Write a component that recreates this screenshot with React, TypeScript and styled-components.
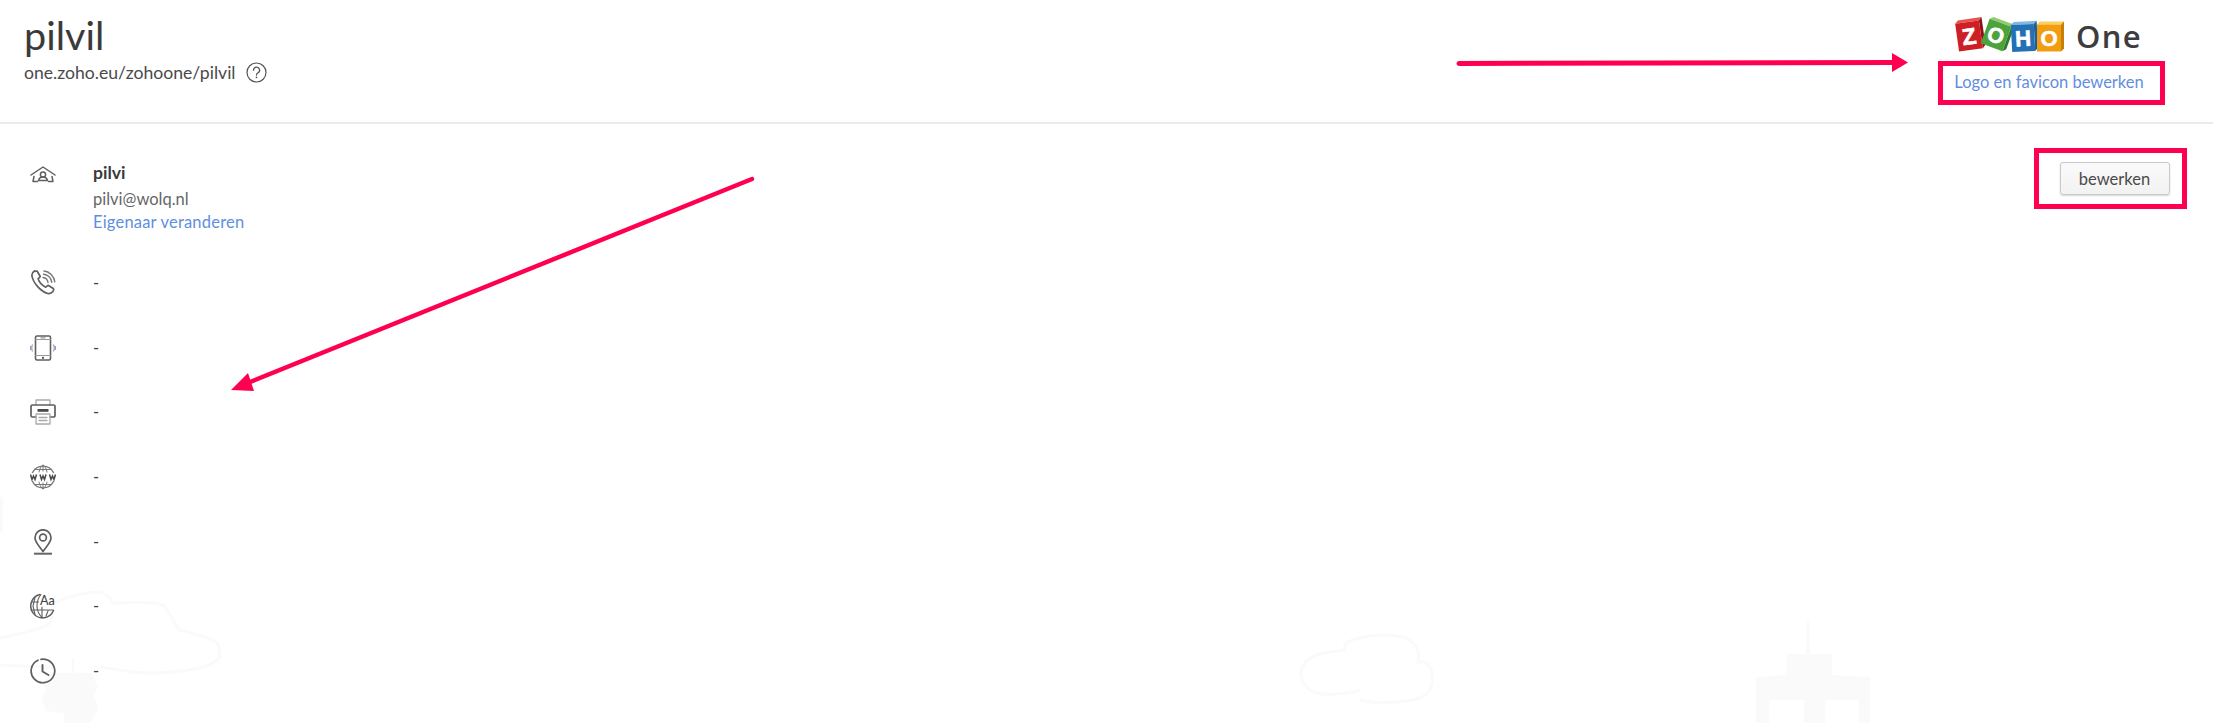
import React from "react";
import styled, { createGlobalStyle } from "styled-components";

const Global = createGlobalStyle`
  html, body { margin: 0; padding: 0; background: #fff; }
  body { font-family: Lato, "Open Sans", sans-serif; color: #333; }
`;

const Page = styled.div`
  position: relative;
  width: 2213px;
  height: 723px;
  overflow: hidden;
  background: #fff;
`;
const Backdrop = styled.svg`
  position: absolute;
  inset: 0;
  pointer-events: none;
`;
const Annotations = styled.svg`
  position: absolute;
  inset: 0;
  pointer-events: none;
  z-index: 3;
`;
const Header = styled.header`
  position: relative;
  height: 124px;
  box-sizing: border-box;
  border-bottom: 2px solid #ebebeb;
  padding: 0 48px 0 24px;
  display: flex;
  justify-content: space-between;
`;
const Org = styled.div`
  display: flex;
  flex-direction: column;
`;
const Title = styled.h1`
  margin: 13px 0 0;
  font-size: 39.6px;
  line-height: 44px;
  font-weight: 400;
  color: #3a3a3a;
`;
const UrlRow = styled.div`
  display: flex;
  align-items: center;
  gap: 10px;
  margin-top: 5px;
  font-size: 17.6px;
  line-height: 20px;
  color: #4a4a4a;
`;
const Brand = styled.div`
  display: flex;
  flex-direction: column;
  align-items: center;
  width: 227px;
`;
const LogoRow = styled.div`
  display: flex;
  align-items: center;
  align-self: flex-start;
  height: 38px;
  margin: 15px 0 0 17px;
  gap: 11px;
`;
const OneText = styled.span`
  font-family: "Open Sans", Lato, sans-serif;
  font-size: 31px;
  line-height: 38px;
  font-weight: 600;
  color: #3d3d3d;
  letter-spacing: 1.3px;
  position: relative;
  top: 2px;
`;
const Redbox = styled.div<{ $w: number; $h: number }>`
  box-sizing: border-box;
  width: ${(p) => p.$w}px;
  height: ${(p) => p.$h}px;
  border: 5px solid #ff0050;
  display: flex;
  align-items: center;
  justify-content: center;
`;
const LogoBox = styled(Redbox)`
  margin-top: 8px;
  padding: 0 5px 2px 0;
`;
const LinkText = styled.a<{ $spacing?: number }>`
  color: #5f8edf;
  font-size: 16.5px;
  line-height: 22px;
  letter-spacing: ${(p) => p.$spacing ?? 0}px;
`;
const Body = styled.main`
  position: relative;
  padding: 24px 26px 0 30px;
  display: flex;
  justify-content: space-between;
  align-items: flex-start;
`;
const InfoList = styled.div`
  display: flex;
  flex-direction: column;
`;
const OwnerRow = styled.div`
  display: flex;
  gap: 37px;
`;
const IconSlot = styled.div`
  width: 26px;
  height: 26px;
  flex: none;
  color: #666;
  svg { display: block; }
`;
const OwnerIconSlot = styled(IconSlot)`
  margin-top: 18px;
`;
const OwnerText = styled.div`
  display: flex;
  flex-direction: column;
  margin-top: 14px;
`;
const OwnerName = styled.div`
  font-size: 17.6px;
  line-height: 22px;
  font-weight: 700;
  color: #3a3a3a;
`;
const OwnerMail = styled.div`
  font-size: 16.5px;
  line-height: 24px;
  margin-top: 3px;
  color: #666;
`;
const Row = styled.div`
  display: flex;
  align-items: center;
  gap: 37px;
  height: 26px;
  margin-top: 38.7px;
`;
const FirstRow = styled(Row)`
  margin-top: 37px;
`;
const Dash = styled.span`
  font-size: 16.5px;
  line-height: 20px;
  color: #444;
`;
const EditBox = styled(Redbox)`
  margin-top: 0;
  padding: 0 0 0 8px;
`;
const Button = styled.button`
  box-sizing: border-box;
  width: 110px;
  height: 33px;
  flex: none;
  border: 1px solid #c9c9c9;
  border-radius: 3px;
  background: linear-gradient(#fafafa, #f2f2f2);
  box-shadow: 0 1px 2px rgba(0, 0, 0, 0.16);
  font-family: Lato, sans-serif;
  font-size: 16.5px;
  color: #4a4a4a;
  padding: 0;
`;

const S = { fill: "none", stroke: "#5f5f5f", strokeWidth: 1.5, strokeLinecap: "round", strokeLinejoin: "round" } as const;

const HelpIcon = () => (
  <svg width="21" height="21" viewBox="0 0 21 21">
    <circle cx="10.5" cy="10.5" r="9.5" fill="none" stroke="#555" strokeWidth="1.2" />
    <path d="M7.6 8.2a3 3 0 1 1 4.4 2.6c-1 .6-1.5 1.1-1.5 2.2" fill="none" stroke="#555" strokeWidth="1.3" strokeLinecap="round" />
    <circle cx="10.5" cy="15.3" r=".9" fill="#555" />
  </svg>
);
const HouseIcon = () => (
  <svg width="26" height="18" viewBox="0 0 26 18">
    <g {...S}>
      <path d="M1 9 13 1l12 8" />
      <path d="M4 10.5 3 15.5h4.5M22 10.5l1 5h-4.5" />
      <circle cx="13" cy="8.5" r="2.6" />
      <path d="M8.5 14.5c.6-2.6 2.3-3.5 4.5-3.5s3.9.9 4.5 3.5z" />
    </g>
  </svg>
);
const PhoneIcon = () => (
  <svg width="26" height="26" viewBox="0 0 26 26">
    <path {...S} strokeWidth={1.7} d="M4 1.5 7 1l3.3 5.5-2.2 2.3c1 3 3.7 6.6 7.6 8.4l2.4-1.9 5.2 3.2c.6.8.3 2-.4 3-1.2 1.5-3 2.5-5 2-7-2-15-10.5-16-18-.2-1.8 1-3.6 2.6-4.5Z" />
    <path {...S} stroke="#777" strokeWidth={1.4} d="M13 7.5c2.5.3 4.7 2.3 5 5M13.5 4.2c4.4.4 7.7 3.8 8.3 8.1M14 1c5.5.5 10 5 10.8 10.8" />
  </svg>
);
const MobileIcon = () => (
  <svg width="26" height="26" viewBox="0 0 26 26">
    <rect {...S} strokeWidth={1.6} x="5.5" y="1" width="15" height="24" rx="1.5" />
    <path {...S} stroke="#999" strokeWidth={1.2} d="M5.5 4.5h15M5.5 20.5h15M11 2.8h4" />
    <circle cx="13" cy="22.8" r="1.1" fill="#444" />
    <path d="M2.5 9.5c-.8 2-.8 5 0 7M.8 11c-.4 1.2-.4 2.8 0 4M23.5 9.5c.8 2 .8 5 0 7M25.2 11c.4 1.2.4 2.8 0 4" fill="none" stroke="#9a96b8" strokeWidth="1.1" />
  </svg>
);
const PrinterIcon = () => (
  <svg width="26" height="26" viewBox="0 0 26 26">
    <path {...S} stroke="#aaa" strokeWidth={1.3} d="M6 6V1h14v5" />
    <path {...S} strokeWidth={1.7} d="M6 18H2.5A1.5 1.5 0 0 1 1 16.5v-9A1.5 1.5 0 0 1 2.5 6h21A1.5 1.5 0 0 1 25 7.5v9a1.5 1.5 0 0 1-1.5 1.5H20" />
    <rect x="7.5" y="10" width="11" height="2.8" fill="#4a4a4a" />
    <path {...S} stroke="#aaa" strokeWidth={1.3} d="M6 15h14v10H6zM9 18.5h8M9 21.5h8" />
  </svg>
);
const WebIcon = () => (
  <svg width="26" height="26" viewBox="0 0 26 26">
    <g {...S} strokeWidth={1} stroke="#777">
      <path d="M2.5 8.5A11.8 11.8 0 0 1 23.5 8.5M2.5 17.5a11.8 11.8 0 0 0 21 0" strokeWidth={1.4} />
      <path d="M4.5 5.5h17M4.5 20.5h17M13 1v6M13 19v6M9 8c.4-3 2-5.5 4-7 2 1.5 3.6 4 4 7M9 18c.4 3 2 5.5 4 7 2-1.5 3.6-4 4-7" />
    </g>
    <path d="M.5 10.5 2 15.5l1.5-3.5 1.500 3.5 1.500-5M10 10.500l1.500 5L13 12l1.500 3.500 1.500-5M19.500 10.500l1.500 5 1.500-3.500 1.500 3.500 1.500-5" fill="none" stroke="#4a4a4a" strokeWidth="1.5" />
  </svg>
);
const PinIcon = () => (
  <svg width="26" height="26" viewBox="0 0 26 26">
    <path {...S} strokeWidth={1.7} d="M13 22.5C9 16.5 5 13.500 5 8.800a8 8 0 0 1 16 0c0 4.700-4 7.700-8 13.700Z" />
    <circle {...S} strokeWidth={1.7} cx="13" cy="8.5" r="3.4" />
    <path d="M4 24.7h18" stroke="#666" strokeWidth="2" />
  </svg>
);
const GlobeTextIcon = () => (
  <svg width="26" height="26" viewBox="0 0 26 26">
    <g {...S} strokeWidth={1.1}>
      <path strokeWidth={1.5} d="M10 1.5a11.8 11.8 0 1 0 13.5 16" />
      <path d="M1.5 9h7M1 17h22M5 4.5 3 13l2 8.500M11 1.500C8 5 7 9 7 13s1.500 8 5 11.500M12 14v11M18 18l-2 5" />
    </g>
    <text x="10" y="11.5" fontFamily="Lato, sans-serif" fontSize="12.5" fontWeight="500" fill="#444">Aa</text>
  </svg>
);
const ClockIcon = () => (
  <svg width="26" height="26" viewBox="0 0 26 26">
    <path {...S} strokeWidth={1.7} d="M8 2.200A11.800 11.800 0 1 0 15.500 1.400 12 12 0 0 0 11 1.300" />
    <path {...S} strokeWidth={1.9} d="M12.500 7v6.500l6 3.500" />
  </svg>
);

type CubeProps = { cx: number; cy: number; w: number; h: number; r: number; top: string; side: string; face: string; letter: string };
const ZohoCube = ({ cx, cy, w, h, r, top, side, face, letter }: CubeProps) => (
  <g transform={`translate(${cx - w / 2} ${cy - h / 2}) rotate(${r} ${w / 2} ${h / 2})`}>
    <path d={`M0 0 L3 -3 L${w + 3} -3 L${w} 0 Z`} fill={top} />
    <path d={`M${w} 0 L${w + 3} -3 L${w + 3} ${h - 3} L${w} ${h} Z`} fill={side} />
    <rect width={w} height={h} fill={face} />
    <text x={w / 2} y={h * 0.8} textAnchor="middle" fontFamily='"Liberation Sans", sans-serif' fontWeight="700" fontSize={h * 0.82} fill="#fff" stroke="#fff" strokeWidth=".6">{letter}</text>
  </g>
);
const ZohoLogo = () => (
  <svg width="110" height="38" viewBox="0 0 110 38" style={{ overflow: "visible" }}>
    <ZohoCube cx={14} cy={21} w={24} h={28} r={-8} top="#e8534b" side="#8e0f14" face="#cf1f26" letter="Z" />
    <ZohoCube cx={41} cy={20} w={23} h={26} r={20} top="#8fcd6b" side="#2c7a2c" face="#4ca23b" letter="O" />
    <ZohoCube cx={68} cy={23} w={23} h={27} r={-3} top="#7fb7e0" side="#1e5f99" face="#2470b5" letter="H" />
    <ZohoCube cx={94} cy={23} w={24} h={27} r={0} top="#f8d25a" side="#c77f08" face="#f29c12" letter="O" />
  </svg>
);

const rows = [PhoneIcon, MobileIcon, PrinterIcon, WebIcon, PinIcon, GlobeTextIcon, ClockIcon];

export default function App() {
  return (
    <Page>
      <Global />
      <Backdrop width="2213" height="723" viewBox="0 0 2213 723">
        <g fill="none" stroke="#fafafa" strokeWidth="3">
          <path d="M0 638c12-3 25-5 33-8 8-2 14-4 17-7 3-6 0-14 4-20 14-6 30-11 43-11 8 0 13 5 16 11 18 0 38-2 50 2 8 8 10 18 17 25 12 4 30 6 37 13 3 5 3 9 3 14-5 6-14 10-20 11-16 3-34 5-50 5-20 0-34-4-50-6M0 665c20 1 40 2 55 2" />
          <path d="M1360 690c-12 4-36 6-46 2-9-4-13-12-13-20 1-8 8-14 18-18 8-2 18-3 26-4-2-8 5-10 15-12 14-4 34-4 46 0 10 5 14 14 12 24 10-2 14 6 14 14 1 10-3 18-12 22-16 5-48 6-60 2" />
        </g>
        <g fill="#fafafa">
          <path d="M1756 723v-46l31-2v-21h19l1-33h2l1 33h22v21l38 2v46h-11v-23h-34v23h-21v-23h-35v23z" />
          <path d="M64 723v-10l-18-2-4-12 4-10-4-6 10-10h20v-15h2v15h18l6 14-4 8 4 14-8 14z" />
          <path d="M0 497h3v35H0z" />
        </g>
      </Backdrop>
      <Header>
        <Org>
          <Title>pilvil</Title>
          <UrlRow>
            one.zoho.eu/zohoone/pilvil
            <HelpIcon />
          </UrlRow>
        </Org>
        <Brand>
          <LogoRow>
            <ZohoLogo />
            <OneText>One</OneText>
          </LogoRow>
          <LogoBox $w={227} $h={44}>
            <LinkText>Logo en favicon bewerken</LinkText>
          </LogoBox>
        </Brand>
      </Header>
      <Body>
        <InfoList>
          <OwnerRow>
            <OwnerIconSlot><HouseIcon /></OwnerIconSlot>
            <OwnerText>
              <OwnerName>pilvi</OwnerName>
              <OwnerMail>pilvi@wolq.nl</OwnerMail>
              <LinkText $spacing={0.2}>Eigenaar veranderen</LinkText>
            </OwnerText>
          </OwnerRow>
          {rows.map((Icon, i) => {
            const R = i === 0 ? FirstRow : Row;
            return (
              <R key={i}>
                <IconSlot><Icon /></IconSlot>
                <Dash>-</Dash>
              </R>
            );
          })}
        </InfoList>
        <EditBox $w={153} $h={61}>
          <Button>bewerken</Button>
        </EditBox>
      </Body>
      <Annotations width="2213" height="723" viewBox="0 0 2213 723">
        <path d="M1459 63.5 1895 62.5" stroke="#ff0050" strokeWidth="5" strokeLinecap="round" />
        <path d="M1892 53 1908 62.5 1892 72Z" fill="#ff0050" />
        <path d="M752 179 245 384" stroke="#ff0050" strokeWidth="4.5" strokeLinecap="round" />
        <path d="M231 390 248 373 254 391Z" fill="#ff0050" />
      </Annotations>
    </Page>
  );
}
